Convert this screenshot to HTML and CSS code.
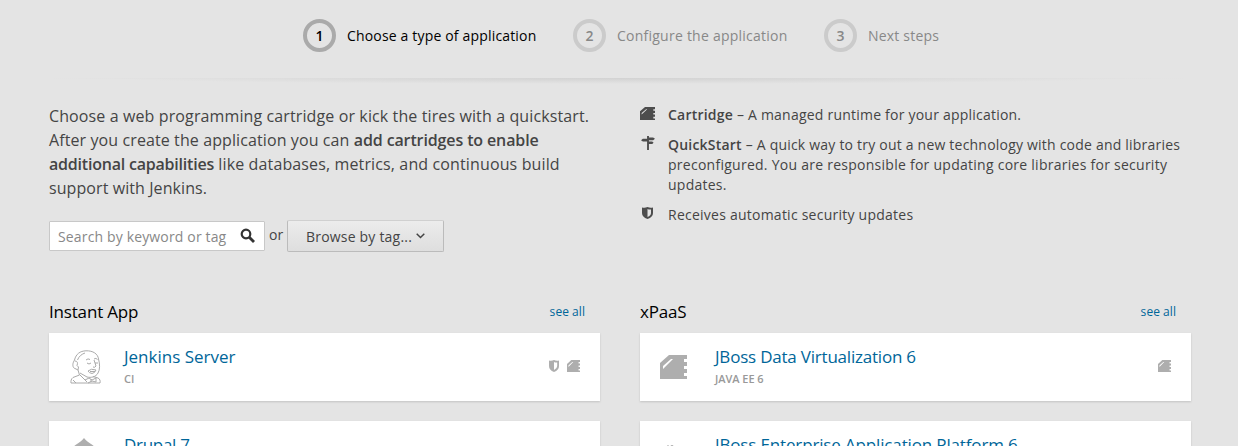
FILE: index.html
```html
<!DOCTYPE html>
<html lang="en">
<head>
<meta charset="utf-8">
<title>Choose a type of application</title>
<link rel="stylesheet" href="styles.css">
</head>
<body>
<svg class="defs" width="0" height="0" aria-hidden="true">
  <symbol id="cartridge" viewBox="0 0 27 24" preserveAspectRatio="none"><path fill-rule="evenodd" d="M9 0H27V4H24V7H27V11H24V14H27V18H24V21H27V24H0V8ZM11 4L3 11V14L13 4Z"/></symbol>
  <symbol id="shield" viewBox="0 0 11 12" preserveAspectRatio="none"><path fill-rule="evenodd" d="M0 .5Q3 1.200 5.500 0Q8 1.200 11 .5V6Q11 10 5.500 12Q0 10 0 6ZM5.500 2V10Q9 8.500 9 6V2.500Q7 2.700 5.500 2Z"/></symbol>
</svg>
<ol class="steps">
  <li class="step active"><span class="num">1</span><span class="label l1">Choose a type of application</span></li>
  <li class="step"><span class="num">2</span><span class="label l2">Configure the application</span></li>
  <li class="step"><span class="num">3</span><span class="label l3">Next steps</span></li>
</ol>
<div class="divider"></div>
<main class="columns">
  <section>
    <div class="top">
      <p class="intro">
        <span class="line i1">Choose a web programming cartridge or kick the tires with a quickstart.</span>
        <span class="line i2">After you create the application you can <b>add cartridges to enable</b></span>
        <span class="line i3"><b>additional capabilities</b> like databases, metrics, and continuous build</span>
        <span class="line i4">support with Jenkins.</span>
      </p>
      <div class="finder">
        <div class="search"><span class="placeholder">Search by keyword or tag</span>
          <svg width="16" height="16" viewBox="0 0 16 16"><circle cx="6" cy="6" r="4.300" fill="none" stroke="#333" stroke-width="2.200"/><path d="M9 9L14 14" stroke="#333" stroke-width="2.800"/></svg>
        </div>
        <span class="or">or</span>
        <div class="browse"><span>Browse by tag...</span><svg width="9" height="6" viewBox="0 0 9 6"><path d="M.7.800L4.500 4.500L8.300.8" fill="none" stroke="#444" stroke-width="1.500"/></svg></div>
      </div>
    </div>
    <header class="head"><h2 class="h-instant">Instant App</h2><a>see all</a></header>
    <article class="card">
      <div class="logo jenkins-logo"><svg width="31" height="34" viewBox="0 0 31 34">
        <path d="M5 18.500C2.500 18 2.500 14 3.500 12L4.500 10C6 4 10 1 16 .8C23 .5 28 4 28.500 9C30 14 30 20 28 23C26 27 21 28 17 27L10 23M5 18.500L8 20L9.500 25L3 27.500C1 29 .8 31 1 33H30C30.500 31 30 29 28 28L23 26.500"/>
        <path d="M7.500 10C9 6 12 4 15 3M5 11C7.500 11 8 13 7 15.500L8.500 17L8 20M16 10Q18 8 20 9.500M24 9Q26 7.500 27.500 9.500M17 13Q19 15 21 13M25 13H28M24 10L26 16Q25 18 23 17M18 21Q21 18 26 20Q25 23 22 23.500Q19 23 18 21M20 21.500H25M10 25L17 32M3 30L6 33M15 30L19 28L22 30L26 28V32L22 31L18 33M21 29V32"/>
      </svg></div>
      <div class="body"><a class="name jenkins">Jenkins Server</a><span class="tag">CI</span></div>
      <div class="marks"><svg width="10" height="12"><use href="#shield"/></svg><svg width="13" height="12"><use href="#cartridge"/></svg></div>
    </article>
    <article class="card">
      <div class="logo drupal-logo"><svg width="30" height="34" viewBox="0 0 30 34"><path d="M15 0Q17 3 23.500 7Q30 12 30 19A15 15 0 0 1 0 19Q0 12 6.500 7Q13 3 15 0Z"/></svg></div>
      <div class="body"><a class="name drupal">Drupal 7</a></div>
    </article>
  </section>
  <section>
    <div class="top legend">
      <div class="item"><svg width="15" height="13"><use href="#cartridge"/></svg><p><span class="line r1"><b>Cartridge</b> – A managed runtime for your application.</span></p></div>
      <div class="item"><svg class="sign" width="14" height="14" viewBox="0 0 15 15"><path d="M6.500 0H8.500V1.500H13L15 3L13 4.500H8.500V6H12L13.500 7.300L12 8.500H8.500V15H6.500V6H2L0 4.500L2 3H6.500Z"/></svg><p><span class="line r2"><b>QuickStart</b> – A quick way to try out a new technology with code and libraries</span><span class="line r3">preconfigured. You are responsible for updating core libraries for security</span><span class="line r4">updates.</span></p></div>
      <div class="item"><svg class="mid" width="11" height="12"><use href="#shield"/></svg><p><span class="line r5">Receives automatic security updates</span></p></div>
    </div>
    <header class="head"><h2 class="h-xpaas">xPaaS</h2><a>see all</a></header>
    <article class="card">
      <div class="logo cartridge-logo"><svg width="27" height="24"><use href="#cartridge"/></svg></div>
      <div class="body"><a class="name virt">JBoss Data Virtualization 6</a><span class="tag java">JAVA EE 6</span></div>
      <div class="marks"><svg width="13" height="12"><use href="#cartridge"/></svg></div>
    </article>
    <article class="card">
      <div class="logo eap-logo"><svg width="28" height="20" viewBox="0 0 28 20"><circle cx="8" cy="1.500" r="1.200"/><circle cx="12" cy="1.500" r="1.500"/><circle cx="10" cy="9" r="4"/></svg></div>
      <div class="body"><a class="name enterprise">JBoss Enterprise Application Platform 6</a></div>
    </article>
  </section>
</main>
</body>
</html>
```

FILE: styles.css
```css
* { box-sizing: border-box; }
body { margin: 0; height: 446px; overflow: hidden; background: #e4e4e4; color: #444; font: 14px/20px "Open Sans", sans-serif; }
.defs { display: block; }
h2, p, ol { margin: 0; padding: 0; font-weight: 400; }
b { font-weight: 600; }
.line { display: block; white-space: nowrap; }
.steps { display: flex; list-style: none; height: 78px; padding: 19px 0 0 303px; }
.step { display: flex; gap: 11px; height: 33px; line-height: 33px; color: #888; white-space: nowrap; }
.step.active { color: #000; }
.num { width: 33px; height: 33px; border: 4px solid #cbcbcb; border-radius: 50%; text-align: center; line-height: 25px; font-weight: 600; }
.active .num { border-color: #aaa; }
.step:nth-child(1) { width: 270px; }
.step:nth-child(2) { width: 251px; }
.l1 { letter-spacing: .17px; }
.l2 { letter-spacing: .24px; }
.l3 { letter-spacing: .2px; }
.divider { height: 6px; margin: 0 49px; background: linear-gradient(90deg, #e4e4e4, #dadada 30%, #d3d3d3 50%, #dadada 70%, #e4e4e4) top / 100% 1px no-repeat, radial-gradient(ellipse 45% 6px at 50% 0, #d2d2d2, #e4e4e4); }
.columns { display: grid; grid-template-columns: 551px 551px; gap: 40px; padding: 20px 0 0 49px; }
.top { height: 198px; }
.intro { font-size: 16px; line-height: 24px; }
.i1 { letter-spacing: .115px; }
.i2 { letter-spacing: .1px; }
.i3 { letter-spacing: .13px; }
.i4 { letter-spacing: .08px; }
.i2 b { letter-spacing: -.12px; }
.i3 b { letter-spacing: -.21px; }
.finder { display: flex; height: 32px; margin-top: 20px; }
.search { display: flex; justify-content: space-between; width: 216px; height: 30px; margin-top: 1px; padding: 6px 8px; border: 1px solid #c8c8c8; border-radius: 1px; background: #fff; color: #888; }
.placeholder { line-height: 17px; letter-spacing: .15px; white-space: nowrap; }
.or { width: 22px; padding-left: 4px; line-height: 30px; }
.browse { display: flex; align-items: center; gap: 4px; width: 157px; padding-left: 18px; border: 1px solid #bbb; border-top-color: #d0d0d0; border-radius: 2px; background: linear-gradient(#ececec, #dedede); white-space: nowrap; letter-spacing: .2px; }
.browse span { padding-top: 2px; }
.legend { padding-top: 1px; }
.item { display: grid; grid-template-columns: 28px 1fr; margin-bottom: 10px; }
.item svg { margin: 2px 0 0; fill: #4d4d4d; }
.item .sign { margin: 1px 0 0 1px; }
.item .mid { margin-left: 2px; }
.r1 { letter-spacing: .22px; }
.r2 { letter-spacing: .21px; }
.r3 { letter-spacing: .26px; }
.r4, .r5 { letter-spacing: .24px; }
.head { display: flex; justify-content: space-between; height: 31px; padding: 0 15px 0 0; }
.head h2 { color: #000; font-size: 17px; line-height: 20px; letter-spacing: -.18px; }
.head a { font-size: 12px; line-height: 19px; letter-spacing: .05px; }
a { color: #069; }
.card { display: flex; height: 68px; margin-bottom: 20px; padding: 0 20px; background: #fff; box-shadow: 0 1px 2px rgba(0, 0, 0, .15); }
.card svg { display: block; fill: #aeaeae; }
.logo { width: 55px; padding-top: 17px; }
.jenkins-logo { padding-left: 1px; }
.jenkins-logo svg { fill: none; stroke: #aaa; stroke-width: 1; }
.cartridge-logo { padding-top: 22px; }
.eap-logo { padding-top: 24px; }
.body { flex: 1; padding-top: 12px; white-space: nowrap; }
.name { display: block; font-size: 17px; line-height: 24px; }
.drupal { letter-spacing: -.3px; }
.virt { letter-spacing: -.21px; }
.enterprise { letter-spacing: -.15px; }
.tag { display: block; color: #999; font-size: 11px; font-weight: 600; line-height: 20px; letter-spacing: -.05px; }
.marks { display: flex; gap: 8px; padding-top: 27px; }
```
